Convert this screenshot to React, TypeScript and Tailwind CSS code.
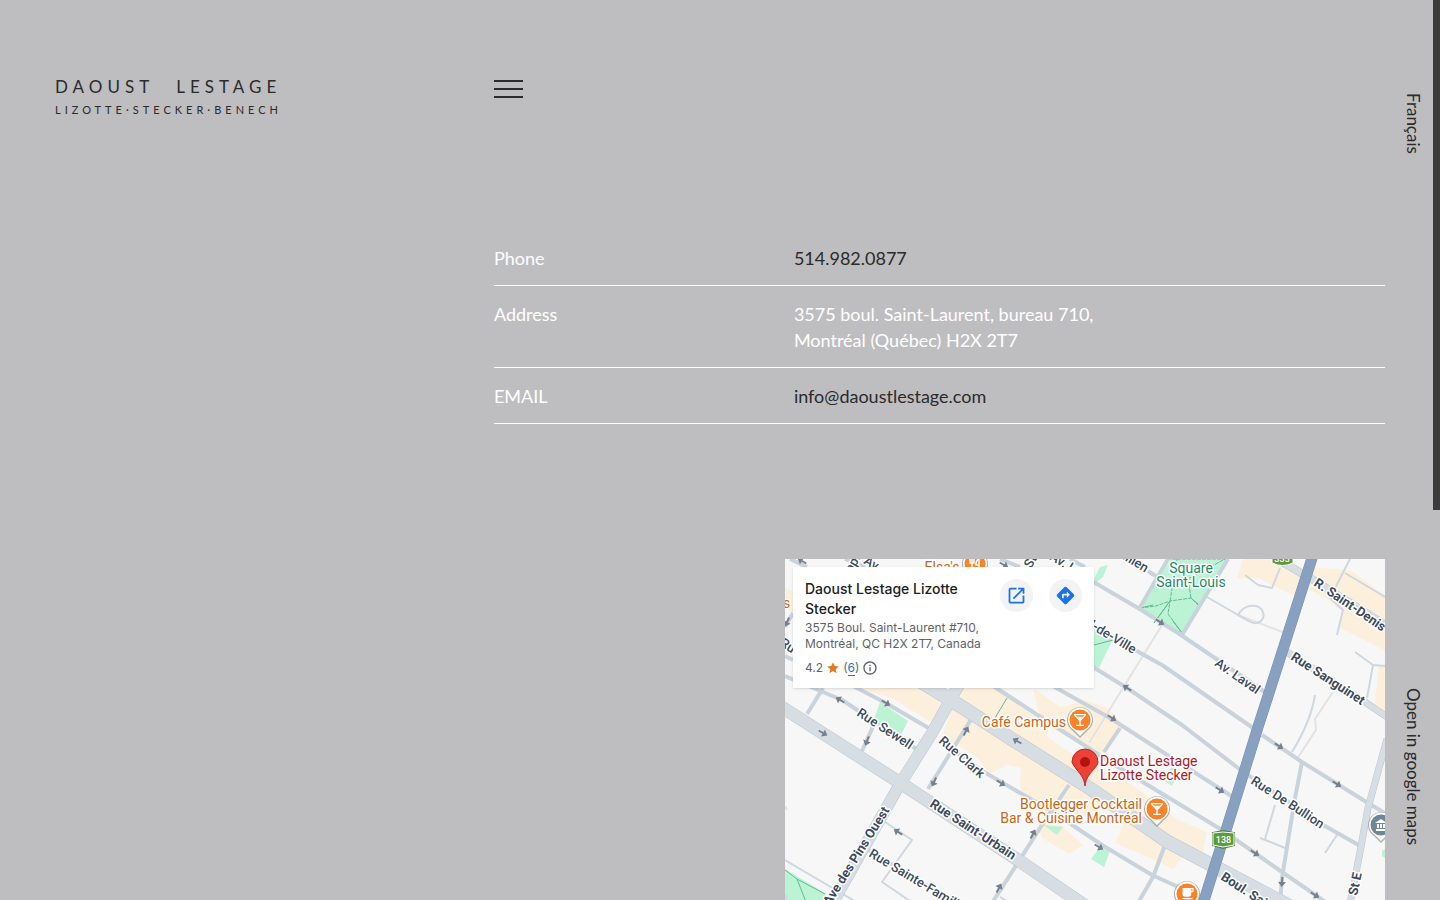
import React from 'react';
import { MdDirections, MdInfoOutline, MdLocalBar, MdLocalCafe, MdOpenInNew, MdStar } from 'react-icons/md';

interface RoadGroup {
  stroke: string;
  width: number;
  paths: string[];
}

interface StreetLabel {
  text: string;
  x: number;
  y: number;
  angle: number;
  bold?: boolean;
}

const commercialAreas = [
  'M74 128 L128 128 L156 144 L147 162 L108 138 Z',
  'M178 128 L212 128 L268 168 L316 196 L337 168 L322 150 L300 143 L275 150 L250 132 L262 180 L300 205 L292 222 L176 150 Z',
  'M168 150 L186 157 L300 230 L284 228 L265 255 L240 240 L236 222 L238 208 L222 204 L205 213 L192 196 L172 184 L158 180 Z',
  'M290 228 L318 248 L282 262 L268 252 Z',
  'M256 265 L276 268 L296 286 L284 293 L258 278 Z',
  'M306 208 L345 226 L392 262 L420 274 L417 292 L404 288 L360 262 L305 226 Z',
  'M344 258 L397 296 L388 309 L378 303 L332 283 Z',
  'M460 0 L500 0 L522 14 L512 36 L486 24 L474 18 L454 18 Z',
  'M530 10 L566 13 L600 38 L600 90 L557 68 L558 51 L545 40 L522 28 Z',
  'M595 108 L600 106 L600 155 L591 148 Z',
  'M314 150 L336 166 L326 176 L306 178 Z',
  'M0 30 L8 34 L8 52 L0 48 Z',
];

const parks = [
  'M386 0 L441 0 L397 75 L355 49 Z',
  'M308 70 L328 80 L314 109 L308 106 Z',
  'M315 8 L323 6 L318 18 L311 24 L309 20 Z',
  'M95 143 L123 162 L114 180 L88 163 Z',
  'M315 288 L325 292 L319 308 L306 300 Z',
  'M258 266 L278 268 L272 276 Z',
  'M386 208 L394 210 L387 227 L380 222 Z',
  'M0 310 L40 334 L46 345 L0 345 Z',
  'M597 292 L600 290 L600 299 L597 297 Z',
];

const roads: RoadGroup[] = [
  {
    stroke: '#e6e2e3',
    width: 2,
    paths: ['M377 66 L304 184', 'M548 133 L530 160 L531 171 L512 200', 'M453 56 L500 74', 'M0 247 L2 251'],
  },
  {
    stroke: '#cfd7df',
    width: 2,
    paths: [
      'M422 38 L453 56 C460 44 473 45 477 51 C482 60 473 68 464 62 L453 56',
      'M460 16 L473 26 L487 29 L495 9',
      'M565 0 L545 39 L558 51 L552 76',
      'M560 14 L600 38',
      'M570 93 L588 106 L600 107 M588 106 L582 139',
      'M530 136 Q526 162 507 193',
      'M490 246 L480 280 M475 279 Q488 284 500 289',
      'M552 276 L540 294',
      'M100 263 L127 281 L97 323 L128 344',
      'M0 301 L68 341 M61 329 L52 344',
      'M215 338 L225 344',
      'M0 335 L3 344',
    ],
  },
  {
    stroke: '#c9d3dc',
    width: 4,
    paths: [
      'M0 117 L57 141 L133 191',
      'M66 126 L99 143 L147 171',
      'M38 129 L22 155',
      'M90 163 L77 192',
      'M187 159 L143 230',
      'M284 226 L257 266 L207 344',
      'M380 286 L368 318 L353 344',
      'M155 182 L199 213 L268 253 L317 286 L367 316 L400 331',
      'M208 127 L268 166 L333 208 L437 271 L497 313 L542 344',
      'M266 126 L325 159 L373 190 L448 238',
      'M300 103 L342 129 L397 166 L457 212',
      'M350 91 L377 106 L468 169',
      'M477 176 L517 203 L583 244 L600 254',
      'M300 18 L353 49 L393 74 L480 133',
      'M363 12 L374 19',
      'M383 0 L354 50',
      'M443 0 L397 76',
      'M335 169 L319 193',
      'M463 216 L540 267 L577 288',
      'M517 203 L510 239 L497 319 L495 344',
      'M80 289 L180 350',
      'M60 0 L80 8 M5 0 L22 8 M215 0 L235 8 M285 0 L300 8',
      'M8 54 L0 68 M0 97 L8 101',
    ],
  },
];

const mainRoads = [
  { d: 'M108 106 L166 141 L233 184 L300 226 L383 283 L510 350', width: 14 },
  { d: 'M-8 145 L117 225 L230 299 L305 350', width: 13 },
  { d: 'M176 122 L147 174 L115 225 L44 350', width: 12 },
  { d: 'M502 93 L580 143 L602 158', width: 7 },
  { d: 'M492 0 L530 22 L602 67', width: 8 },
  { d: 'M602 180 L583 249 L575 293 L564 350', width: 7 },
];

const streetLabels: StreetLabel[] = [
  { text: 'Rue Sewell', x: 71, y: 156, angle: 33 },
  { text: 'Rue Clark', x: 153, y: 183, angle: 41 },
  { text: 'Rue Saint-Urbain', x: 144, y: 247, angle: 33, bold: true },
  { text: 'Rue Sainte-Famille', x: 83, y: 297, angle: 31 },
  { text: 'Ave des Pins Ouest', x: 45, y: 347, angle: -58, bold: true },
  { text: 'Av. Laval', x: 429, y: 106, angle: 35 },
  { text: 'Rue Sanguinet', x: 505, y: 100, angle: 33, bold: true },
  { text: 'R. Saint-Denis', x: 528, y: 26, angle: 34, bold: true },
  { text: 'Rue De Bullion', x: 465, y: 224, angle: 33 },
  { text: "Rue de l'Hôtel-de-Ville", x: 238, y: 29, angle: 31 },
  { text: 'Rue Drolet-Vallien', x: 271, y: -40, angle: 31 },
  { text: 'Boul. Saint-Laurent', x: 435, y: 320, angle: 33, bold: true },
  { text: 'St E', x: 572, y: 337, angle: -78, bold: true },
  { text: 'Rue', x: -6, y: 86, angle: 33 },
  { text: 'ap.', x: 67, y: 14, angle: -60 },
  { text: 'Av.', x: 78, y: 4, angle: 31 },
  { text: 'St', x: 246, y: 10, angle: -60 },
  { text: 'Av. L', x: 264, y: 0, angle: 31 },
];

const arrows = [
  [101, 144, 30], [55, 141, 210], [38, 174, 30], [82, 182, 112], [181, 172, -62], [149, 223, 115],
  [232, 182, 210], [216, 224, 32], [113, 273, 212], [248, 275, -62], [214, 329, -62], [314, 288, 30],
  [327, 159, 32], [342, 129, 212], [375, 63, 32], [435, 231, 32], [494, 187, 32], [552, 225, 32],
  [470, 294, 32], [530, 336, 32], [497, 323, 95], [17, 2, 210], [219, 6, 30], [2, 63, 115],
];

const poiLabels = [
  { lines: ["Elsa's"], x: 157, y: 13, anchor: 'middle', color: '#c96516' },
  { lines: ['s'], x: -2, y: 49, anchor: 'start', color: '#c96516' },
  { lines: ['Square', 'Saint-Louis'], x: 406, y: 14, anchor: 'middle', color: '#1d8a63' },
  { lines: ['Café Campus'], x: 281, y: 168, anchor: 'end', color: '#c96516' },
  { lines: ['Daoust Lestage', 'Lizotte Stecker'], x: 315, y: 207, anchor: 'start', color: '#b3181d' },
  { lines: ['Bootlegger Cocktail', 'Bar & Cuisine Montréal'], x: 357, y: 250, anchor: 'end', color: '#c96516' },
] as const;

const PoiPin: React.FC<{ x: number; y: number; color: string; children: React.ReactNode }> = ({ x, y, color, children }) => (
  <g transform={`translate(${x} ${y})`}>
    <path d="M0 18 L-7 11 A13 13 0 1 1 7 11 Z" fill="#8b9197" opacity="0.7" />
    <path d="M0 16 L-6 10 A12 12 0 1 1 6 10 Z" fill="#fff" />
    <circle r="10.5" fill={color} />
    {children}
  </g>
);

const StreetMap: React.FC = () => (
  <svg
    viewBox="0 0 600 341"
    preserveAspectRatio="xMidYMin slice"
    className="block h-full w-full font-[Roboto,sans-serif]"
    role="img"
    aria-label="Map of Montréal"
  >
    <rect width="600" height="341" fill="#f7f7f7" />
    {commercialAreas.map((d) => (
      <path key={d} d={d} fill="#fcf0dc" stroke="#fcf0dc" strokeWidth="3" strokeLinejoin="round" />
    ))}
    {parks.map((d) => (
      <path key={d} d={d} fill="#bdf3d5" />
    ))}
    <g fill="none" stroke="#62bb92" strokeWidth="1">
      <path
        d="M382 0 L441 0 M355 49 L371 47 L385 42 L369 64 M385 42 L392 0 M397 74 L383 55 L385 42 L406 39 L413 46 M406 39 L403 20 L440 0"
        strokeDasharray="4 1"
      />
      <path d="M369 64 L385 42 M355 49 L368 46 M397 74 L388 62 M406 39 L413 45" />
      <path d="M309 86 L328 81 M222 139 L210 159 M0 311 L12 320 L21 343 M12 320 L40 335" />
    </g>
    {roads.map((group) => (
      <g key={group.stroke} fill="none" stroke={group.stroke} strokeWidth={group.width} strokeLinejoin="round">
        {group.paths.map((d) => (
          <path key={d} d={d} />
        ))}
      </g>
    ))}
    <g fill="none" stroke="#bcc7d1">
      {mainRoads.map((road) => (
        <path key={road.d} d={road.d} strokeWidth={road.width} />
      ))}
    </g>
    <g fill="none" stroke="#d6dde3">
      {mainRoads.map((road) => (
        <path key={road.d} d={road.d} strokeWidth={road.width - 1} />
      ))}
    </g>
    <path d="M528 -4 L500 84 L473 168 L438 281 L417 348" fill="none" stroke="#7691b5" strokeWidth="11" />
    <path d="M528 -4 L500 84 L473 168 L438 281 L417 348" fill="none" stroke="#88a1c1" strokeWidth="10" />

    {arrows.map(([x, y, angle]) => (
      <path
        key={`${x}-${y}`}
        d="M-5 -1 H0 V-4 L5 0 L0 4 V1 H-5 Z"
        fill="#75818e"
        transform={`translate(${x} ${y}) rotate(${angle})`}
      />
    ))}

    <g fill="#3c4a5c" stroke="#fff" strokeWidth="3" strokeLinejoin="round" paintOrder="stroke" fontSize="13">
      {streetLabels.map((label) => (
        <text
          key={label.text}
          fontWeight={label.bold ? 700 : 500}
          transform={`translate(${label.x} ${label.y}) rotate(${label.angle})`}
        >
          {label.text}
        </text>
      ))}
    </g>

    <g>
      <path d="M487 -8 H508 V4 Q498 9 487 4 Z" fill="#5d9b3e" stroke="#fff" />
      <text x="497" y="3" fontSize="9" fontWeight="500" fill="#fff" textAnchor="middle">335</text>
      <path d="M428 274 L438 272 L449 274 V286 L438 289 L428 286 Z" fill="#5d9b3e" stroke="#4b8630" strokeWidth="2" />
      <path d="M428 274 L438 273 L449 274 V286 L438 288 L428 286 Z" fill="#5d9b3e" stroke="#fff" />
      <text x="438.5" y="284" fontSize="9" fontWeight="500" fill="#fff" textAnchor="middle">138</text>
    </g>

    <PoiPin x={190} y={5} color="#fb8326">
      <path
        d="M-5 -5 V-1 H-1 V-5 M-3 -5 V5 M4 5 V-5 Q1 -4 1 1 H4"
        fill="none"
        stroke="#fff"
        strokeWidth="1.5"
      />
    </PoiPin>
    <PoiPin x={295} y={161} color="#fb8326">
      <MdLocalBar x={-8} y={-8} size={16} color="#fff" />
    </PoiPin>
    <PoiPin x={372} y={250} color="#fb8326">
      <MdLocalBar x={-8} y={-8} size={16} color="#fff" />
    </PoiPin>
    <PoiPin x={402} y={335} color="#fb8326">
      <MdLocalCafe x={-7} y={-8} size={15} color="#fff" />
    </PoiPin>
    <PoiPin x={596} y={266} color="#6c8796">
      <path d="M-6 -2 L0 -6 L6 -2 Z M-5 4 H5 V6 H-5 Z M-4 -1 H-2 V3 H-4 Z M-1 -1 H1 V3 H-1 Z M2 -1 H4 V3 H2 Z" fill="#fff" />
    </PoiPin>

    <path
      d="M300 227 C299 219 296 216 292 211 C289 207 287 204 287 203 A13 13 0 1 1 313 203 C313 205 311 208 308 211 C304 216 301 219 300 227 Z"
      fill="#ea4335"
      stroke="#c5221f"
      strokeWidth="1"
    />
    <circle cx="300" cy="203" r="5" fill="#b31412" />

    <g stroke="#fff" strokeWidth="3" strokeLinejoin="round" paintOrder="stroke" fontSize="14">
      {poiLabels.map((poi) => (
        <text key={poi.lines[0]} x={poi.x} y={poi.y} textAnchor={poi.anchor} fill={poi.color}>
          {poi.lines.map((line, i) => (
            <tspan key={line} x={poi.x} dy={i === 0 ? 0 : 14}>
              {line}
            </tspan>
          ))}
        </text>
      ))}
    </g>
  </svg>
);

const PlaceCard: React.FC = () => (
  <div className="absolute top-2 left-2 flex w-[301px] justify-between bg-white p-3 font-[Inter,sans-serif] shadow">
    <div className="w-[180px]">
      <h2 className="text-sm leading-5 font-medium text-[#202124]">Daoust Lestage Lizotte Stecker</h2>
      <p className="pt-px text-xs leading-4 text-[#5f6368]">
        3575 Boul. Saint-Laurent #710,
        <br />
        Montréal, QC H2X 2T7, Canada
      </p>
      <div className="mt-2 flex h-4 items-center gap-[3px] text-xs text-[#5f6368]">
        <span>4.2</span>
        <MdStar size={14} color="#e37822" />
        <span>
          (<a href="#reviews" className="border-b border-[#1a73e8] text-[#1a73e8]">6</a>)
        </span>
        <MdInfoOutline size={16} />
      </div>
    </div>
    <div className="flex gap-4">
      <a href="#map" aria-label="Open in Maps" className="flex size-[33px] items-center justify-center rounded-full bg-[#f1f3f4]">
        <MdOpenInNew size={21} color="#1a73e8" />
      </a>
      <a href="#directions" aria-label="Directions" className="flex size-[33px] items-center justify-center rounded-full bg-[#f1f3f4]">
        <MdDirections size={21} color="#1a73e8" />
      </a>
    </div>
  </div>
);

const ContactRow: React.FC<{ label: string; children: React.ReactNode }> = ({ label, children }) => (
  <div className="flex border-b border-white pt-[15px] pb-3.5">
    <dt className="w-[300px] shrink-0">{label}</dt>
    <dd>{children}</dd>
  </div>
);

export default function App() {
  return (
    <div className="relative flex h-screen overflow-hidden bg-[#bebec0] font-[Lato,sans-serif] text-[#2b2b2b]">
      <div className="flex flex-1 pl-[55px]">
        <header className="w-[33%] pt-[76px]">
          <a href="#home" className="block whitespace-nowrap">
            <span className="flex gap-[22px] text-[17px] leading-[22px] tracking-[5px]">
              <span>DAOUST</span>
              <span>LESTAGE</span>
            </span>
            <span className="mt-1 block text-[11px] leading-4 tracking-[4px]">LIZOTTE·STECKER·BENECH</span>
          </a>
        </header>

        <main className="flex flex-1 flex-col pt-20">
          <button type="button" aria-label="Menu" className="flex w-[29px] flex-col gap-1.5">
            <span className="h-0.5 w-full bg-[#2b2b2b]" />
            <span className="h-0.5 w-full bg-[#2b2b2b]" />
            <span className="h-0.5 w-full bg-[#2b2b2b]" />
          </button>

          <dl className="mt-[132px] text-lg leading-[26px] text-white">
            <ContactRow label="Phone">
              <a href="tel:5149820877" className="text-[#2b2b2b]">514.982.0877</a>
            </ContactRow>
            <ContactRow label="Address">
              3575 boul. Saint-Laurent, bureau 710,
              <br />
              Montréal (Québec) H2X 2T7
            </ContactRow>
            <ContactRow label="EMAIL">
              <a href="mailto:info@daoustlestage.com" className="text-[#2b2b2b]">info@daoustlestage.com</a>
            </ContactRow>
          </dl>

          <section className="relative mt-[135px] min-h-0 w-[600px] max-w-full flex-1 self-end">
            <StreetMap />
            <PlaceCard />
          </section>
        </main>
      </div>

      <nav className="flex w-[55px] flex-col items-center justify-between pt-[93px] pb-[55px] text-[17px] leading-5">
        <a href="#fr" className="[writing-mode:vertical-rl]">Français</a>
        <a href="#google-maps" className="[writing-mode:vertical-rl]">Open in google maps</a>
      </nav>

      <div className="absolute top-0 right-0 h-[510px] w-[7px] bg-[#3b3b3b]" />
    </div>
  );
}
